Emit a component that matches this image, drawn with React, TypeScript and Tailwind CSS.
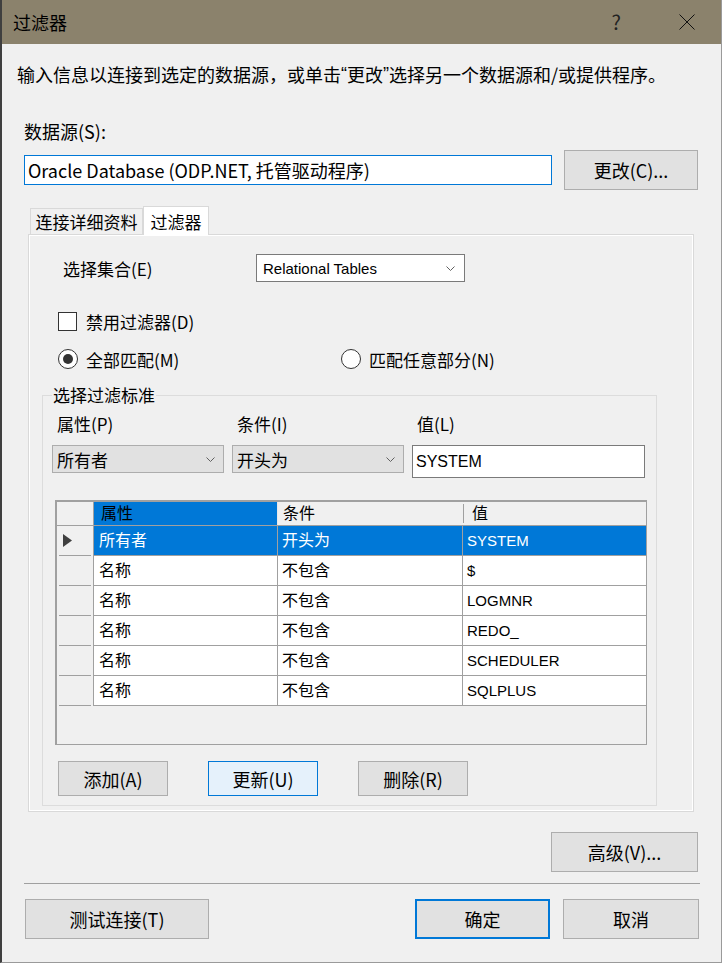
import type { ReactNode } from "react"

const ui = "font-['Noto_Sans_CJK_SC',sans-serif]"
const latin = "font-['Liberation_Sans','Noto_Sans_CJK_SC',sans-serif]"

const rows = [
  { attr: "所有者", cond: "开头为", value: "SYSTEM", selected: true },
  { attr: "名称", cond: "不包含", value: "$" },
  { attr: "名称", cond: "不包含", value: "LOGMNR" },
  { attr: "名称", cond: "不包含", value: "REDO_" },
  { attr: "名称", cond: "不包含", value: "SCHEDULER" },
  { attr: "名称", cond: "不包含", value: "SQLPLUS" },
]

function Btn({ children, className = "" }: { children: ReactNode; className?: string }) {
  return (
    <button className={`flex items-center justify-center text-[18px] leading-none text-black ${className}`}>
      {children}
    </button>
  )
}

function Chevron() {
  return (
    <svg width="9" height="5" viewBox="0 0 9 5" className="shrink-0">
      <polyline points="0.5,0.5 4.5,4.5 8.5,0.5" fill="none" stroke="#606060" strokeWidth="1" />
    </svg>
  )
}

function Radio({ checked }: { checked?: boolean }) {
  return (
    <div className="w-[20px] h-[20px] rounded-full border border-[#333333] bg-white flex items-center justify-center shrink-0">
      {checked && <div className="w-[10px] h-[10px] rounded-full bg-[#333333]" />}
    </div>
  )
}

export default function App() {
  return (
    <div className={`${ui} w-[722px] h-[963px] bg-[#f0f0f0] border-l-2 border-l-[#3f3f3f] border-r border-r-[#9a9a9a] border-b border-b-[#9a9a9a] flex flex-col text-black overflow-hidden`}>
      {/* title bar */}
      <div className="h-[44px] shrink-0 bg-[#8b826c] flex items-center pl-[11px] pr-[26px]">
        <span className="text-[18px] leading-none">过滤器</span>
        <span className="ml-auto text-[20px] leading-none text-[#222]">?</span>
        <svg width="16" height="16" viewBox="0 0 16 16" className="ml-[58px]">
          <path d="M0.5 0.5 L15.5 15.5 M15.5 0.5 L0.5 15.5" stroke="#111" strokeWidth="1" />
        </svg>
      </div>

      <p className="mt-[19px] ml-[15px] h-[22px] text-[18px] leading-[22px] whitespace-nowrap">
        输入信息以连接到选定的数据源，或单击<span className={`${latin} align-top`}>“</span>更改<span className={`${latin} align-top`}>”</span>选择另一个数据源和/或提供程序。
      </p>

      <div className="mt-[35px] ml-[22px] text-[18px] leading-[22px]">数据源(S):</div>

      <div className="mt-[8px] ml-[22px] flex items-center gap-[12px]">
        <div className="w-[528px] h-[30px] border border-[#0078d7] bg-white flex items-center pl-[3px] text-[18px] leading-none whitespace-nowrap">
          Oracle Database (ODP.NET, 托管驱动程序)
        </div>
        <Btn className="w-[134px] h-[40px] bg-[#e1e1e1] border border-[#adadad]">更改(C)...</Btn>
      </div>

      {/* tabs */}
      <div className="mt-[16px] ml-[26px] flex items-end h-[28px] relative z-10">
        <div className="ml-[2px] w-[113px] h-[26px] border border-b-0 border-[#d9d9d9] bg-[#f0f0f0] flex items-center justify-center text-[17px] leading-none">
          连接详细资料
        </div>
        <div className="w-[66px] h-[29px] -mb-px border border-b-0 border-[#d9d9d9] bg-white flex items-center justify-center text-[17px] leading-none">
          过滤器
        </div>
      </div>

      {/* tab page */}
      <div className="ml-[26px] w-[666px] h-[578px] shrink-0 border border-[#d9d9d9] shadow-[inset_0_0_0_1px_#ffffff] bg-[#f0f0f0] flex flex-col">
        <div className="mt-[19px] flex items-center h-[28px]">
          <span className="ml-[34px] w-[193px] text-[17px] leading-none">选择集合(E)</span>
          <div className="w-[209px] h-[28px] border border-[#7a7a7a] bg-white flex items-center justify-between pl-[6px] pr-[9px]">
            <span className={`${latin} text-[15px] leading-none`}>Relational Tables</span>
            <Chevron />
          </div>
        </div>

        <div className="mt-[30px] ml-[29px] flex items-center h-[19px]">
          <div className="w-[19px] h-[19px] border border-[#333333] bg-white" />
          <span className="ml-[9px] text-[17px] leading-none">禁用过滤器(D)</span>
        </div>

        <div className="mt-[18px] ml-[29px] flex items-center h-[20px]">
          <div className="w-[283px] flex items-center">
            <Radio checked />
            <span className="ml-[8px] text-[17px] leading-none">全部匹配(M)</span>
          </div>
          <Radio />
          <span className="ml-[8px] text-[17px] leading-none">匹配任意部分(N)</span>
        </div>

        <fieldset className="mt-[16px] ml-[13px] w-[615px] h-[421px] border border-[#dcdcdc] pl-[9px] flex flex-col">
          <legend className="px-[1px] text-[17px] leading-[20px]">选择过滤标准</legend>

          <div className="mt-[9px] grid grid-cols-[172px_172px_233px] gap-x-[8px] items-start">
            <span className="ml-[5px] text-[17px] leading-[20px]">属性(P)</span>
            <span className="ml-[5px] text-[17px] leading-[20px]">条件(I)</span>
            <span className="ml-[5px] text-[17px] leading-[20px]">值(L)</span>

            <div className="mt-[11px] h-[28px] bg-[#e1e1e1] border border-[#adadad] flex items-center justify-between pl-[4px] pr-[8px]">
              <span className="text-[17px] leading-none">所有者</span>
              <Chevron />
            </div>
            <div className="mt-[11px] h-[28px] bg-[#e1e1e1] border border-[#adadad] flex items-center justify-between pl-[4px] pr-[8px]">
              <span className="text-[17px] leading-none">开头为</span>
              <Chevron />
            </div>
            <div className="mt-[11px] h-[33px] bg-white border border-[#7a7a7a] pl-[3px] pt-[2px]">
              <span className={`${latin} text-[16px] leading-[20px]`}>SYSTEM</span>
            </div>
          </div>

          {/* data grid */}
          <div className={`${latin} mt-[22px] ml-[3px] w-[592px] h-[245px] shrink-0 border-t-2 border-l-2 border-r border-b border-[#a0a0a0] bg-[#f0f0f0] overflow-hidden text-[16px]`}>
            <div className="grid grid-cols-[37px_184px_185px_1fr] h-[24px] border-b border-[#a0a0a0]">
              <div className="border-r border-[#a0a0a0]" />
              <div className="bg-[#0078d7] border-r border-[#e8e8e8] flex items-center pl-[7px] leading-none">属性</div>
              <div className="flex items-center pl-[5px] leading-none">
                <span>条件</span>
              </div>
              <div className="flex items-center">
                <div className="w-px h-[19px] bg-[#a0a0a0]" />
                <span className="ml-[8px] leading-none">值</span>
              </div>
            </div>
            {rows.map((r, i) => (
              <div key={i} className="grid grid-cols-[37px_184px_185px_1fr] h-[30px]">
                <div className="border-r border-[#a0a0a0] flex flex-col justify-end px-[2px]">
                  <div className="flex-1 flex items-center pl-[4px]">
                    {r.selected && (
                      <svg width="9" height="13" viewBox="0 0 9 13">
                        <polygon points="0,0 9,6.5 0,13" fill="#404040" />
                      </svg>
                    )}
                  </div>
                  <div className="h-px bg-[#a0a0a0]" />
                </div>
                <div className={`border-r border-b border-[#a0a0a0] flex items-center pl-[5px] leading-none ${r.selected ? "bg-[#0078d7] text-white" : "bg-white"}`}>
                  {r.attr}
                </div>
                <div className={`border-r border-b border-[#a0a0a0] flex items-center pl-[4px] leading-none ${r.selected ? "bg-[#0078d7] text-white" : "bg-white"}`}>
                  {r.cond}
                </div>
                <div className={`border-b border-[#a0a0a0] flex items-center pl-[4px] text-[15px] leading-none ${r.selected ? "bg-[#0078d7] text-white" : "bg-white"}`}>
                  {r.value}
                </div>
              </div>
            ))}
          </div>

          <div className="mt-[16px] ml-[6px] flex items-center">
            <Btn className="w-[110px] h-[35px] bg-[#e1e1e1] border border-[#adadad] text-[17px]">添加(A)</Btn>
            <Btn className="ml-[40px] w-[110px] h-[35px] bg-[#e5f1fb] border border-[#0078d7] text-[17px]">更新(U)</Btn>
            <Btn className="ml-[40px] w-[110px] h-[35px] bg-[#e1e1e1] border border-[#adadad] text-[17px]">删除(R)</Btn>
          </div>
        </fieldset>
      </div>

      <Btn className="mt-[20px] ml-[549px] w-[147px] h-[40px] bg-[#e1e1e1] border border-[#adadad]">高级(V)...</Btn>

      <div className="mt-[11px] ml-[22px] w-[676px] h-px bg-[#a0a0a0]" />

      <div className="mt-[15px] ml-[23px] flex items-center">
        <Btn className="w-[184px] h-[40px] bg-[#e1e1e1] border border-[#adadad]">测试连接(T)</Btn>
        <Btn className="ml-[206px] w-[135px] h-[40px] bg-[#e1e1e1] border-2 border-[#0078d7]">确定</Btn>
        <Btn className="ml-[13px] w-[136px] h-[40px] bg-[#e1e1e1] border border-[#adadad]">取消</Btn>
      </div>
    </div>
  )
}
